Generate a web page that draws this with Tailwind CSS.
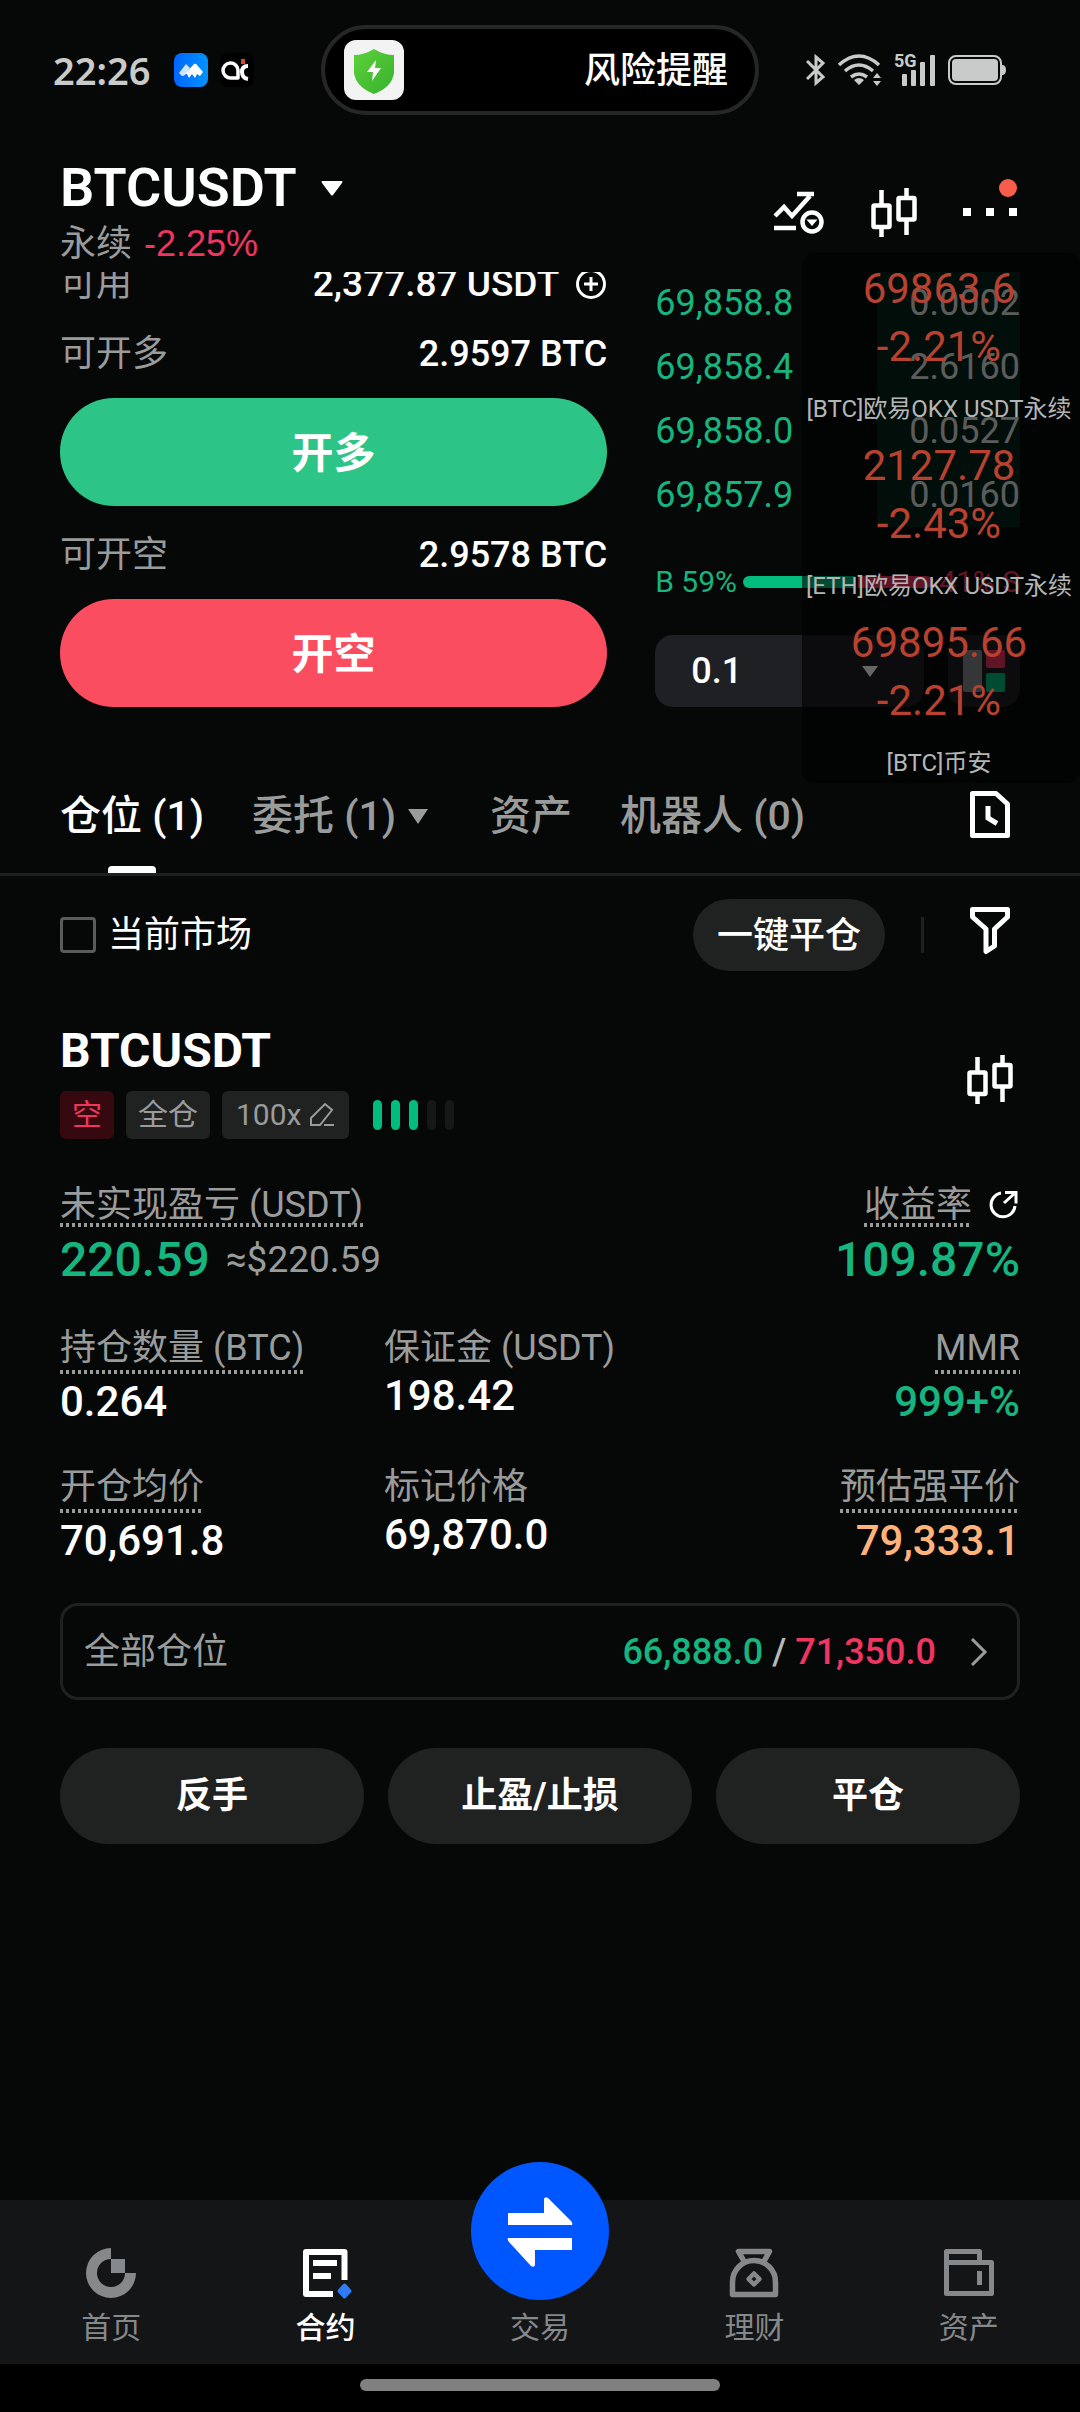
<!DOCTYPE html>
<html lang="zh-CN">
<head>
<meta charset="utf-8">
<meta name="viewport" content="width=device-width, initial-scale=1">
<title>BTCUSDT 永续</title>
<script src="https://cdn.jsdelivr.net/npm/@tailwindcss/browser@4"></script>
</head>
<body class="bg-[#060808] text-white font-[Roboto,'Noto_Sans_CJK_SC',sans-serif] text-[36px] leading-[48px]">
<div class="relative flex min-h-screen flex-col">

  <!-- Status bar -->
  <div class="grid h-[140px] grid-cols-[1fr_auto_1fr] items-center">
    <div class="flex items-center pl-[53px] text-[#c9cbcb]">
      <time class="font-['Noto_Sans',sans-serif] text-[38px] font-semibold">22:26</time>
      <svg class="ml-6 size-[34px]" viewBox="0 0 34 34" role="img" aria-label="消息应用"><defs><linearGradient id="blue" x1="0" y1="0" x2="1" y2="0"><stop stop-color="#0066ff"/><stop offset="1" stop-color="#0093ff"/></linearGradient></defs><rect width="34" height="34" rx="8" fill="url(#blue)"/><path d="M5 20l7-9 4 4-5 7q-3 2-4 0z" fill="#cfe5ff"/><path d="M11 21l9-10q2-1 3 1l6 7-3 4-3-2-2 4-3-4-3 4-2-4z" fill="#fff"/></svg>
      <svg class="ml-3 size-[34px]" viewBox="0 0 34 34" role="img" aria-label="应用通知"><rect width="34" height="34" rx="8" fill="#000"/><path d="M18 25h-7a7.500 7.500 0 1 1 7-8z" fill="none" stroke="#fff" stroke-width="3.500" stroke-linejoin="round"/><path d="M28 13q-6 0-6 6t6 7" fill="none" stroke="#fff" stroke-width="4"/><path d="M21 6h4v5h-4z" fill="#d4492f"/></svg>
    </div>
    <div class="flex h-[90px] w-[438px] items-center justify-between rounded-full border-4 border-[#252626] bg-black pr-[27px] pl-[19px]">
      <svg class="size-[60px]" viewBox="0 0 60 60" role="img" aria-label="安全"><defs><linearGradient id="green" x1="0" y1="0" x2="1" y2="1"><stop stop-color="#5dd23c"/><stop offset="1" stop-color="#37b02c"/></linearGradient></defs><rect width="60" height="60" rx="12" fill="#f3f3f3"/><path d="M30 9q10 6 20 6v18q-2 14-20 21Q12 47 10 33V15q10 0 20-6z" fill="url(#green)"/><path d="M32 20L23 32h6l-1 9 9-13h-6z" fill="#fff"/></svg>
      <span class="pt-[2px] font-medium">风险提醒</span>
    </div>
    <div class="flex items-center justify-end gap-3 pr-[74px] text-[#c9cbcb]">
      <svg class="h-8 w-5" viewBox="0 0 20 32" fill="none" stroke="currentColor" stroke-width="3" role="img" aria-label="蓝牙"><path d="M1 7l16 16-7 6V3l7 6L1 25"/></svg>
      <svg class="h-8 w-11" viewBox="0 0 44 32" fill="none" stroke="currentColor" stroke-width="3.500" role="img" aria-label="无线网络"><path d="M1 11q20-18 40 0M7 17q14-12 28 0M13 23q8-6 16 0"/><path d="M21 31l-5-5q5-4 10 0zM39 19l4 5h-8zM39 32l4-5h-8z" fill="currentColor" stroke="none"/></svg>
      <div class="relative h-8 w-[42px]">
        <span class="absolute top-0 left-0 text-[18px] leading-[14px] font-bold">5G</span>
        <svg class="h-8 w-[42px]" viewBox="0 0 42 32" fill="currentColor" role="img" aria-label="信号"><rect x="8" y="20" width="5" height="12" rx="1"/><rect x="17" y="16" width="5" height="16" rx="1"/><rect x="26" y="8" width="5" height="24" rx="1"/><rect x="36" y="1" width="5" height="31" rx="1"/></svg>
      </div>
      <svg class="h-[30px] w-[58px]" viewBox="0 0 58 30" role="img" aria-label="电量"><rect x="1" y="1" width="52" height="28" rx="7" fill="none" stroke="currentColor" stroke-width="2"/><rect x="4" y="4" width="46" height="22" rx="4" fill="currentColor"/><path d="M54 10q4 0 4 5t-4 5z" fill="currentColor"/></svg>
    </div>
  </div>

  <!-- Pair header -->
  <header class="flex justify-between px-[60px] pt-4 pb-1">
    <div>
      <h1><button class="flex items-center gap-6 text-[54px] leading-16 font-semibold">BTCUSDT
        <svg class="h-[15px] w-[22px]" viewBox="0 0 22 15" fill="currentColor" aria-hidden="true"><path d="M1 0h20q1 0 0 2l-9 12q-1 1-2 0L1 2q-1-2 0-2z"/></svg></button></h1>
      <p class="flex gap-3"><span class="text-[#9a9c9c]">永续</span> <span class="font-['Liberation_Sans',sans-serif] text-[#f03560]">-2.25%</span></p>
    </div>
    <div class="mt-[26px] flex h-[60px] gap-9">
      <button aria-label="指标"><svg class="size-[60px]" viewBox="0 0 60 60" fill="none" stroke="currentColor" stroke-width="4.500"><path d="M7 34l9-9 8 9 18-20M29 12h17M6 46h22"/><circle cx="44" cy="40" r="9.500"/><path d="M38.500 37.500h11L44 44z" fill="currentColor" stroke="none"/></svg></button>
      <button aria-label="K线"><svg class="size-[60px]" viewBox="0 0 60 60" fill="none" stroke="currentColor" stroke-width="4.500"><rect x="9.500" y="23.500" width="16" height="21.500" rx="1"/><rect x="34.500" y="16" width="16" height="21.500" rx="1"/><path d="M17.500 8v15M17.500 46v9M42.500 6v10M42.500 38v15"/></svg></button>
      <button aria-label="更多"><svg class="size-[60px] overflow-visible" viewBox="0 0 60 60" fill="currentColor"><path d="M3 26h8v8H3zM26 26h8v8h-8zM49 26h8v8h-8z"/><circle cx="48" cy="6" r="9" fill="#f85d4b"/></svg></button>
    </div>
  </header>

  <main>
    <!-- Order form and order book, scrolled under the header -->
    <section class="overflow-hidden px-[60px]">
      <div class="-mt-3 grid grid-cols-[3fr_2fr] gap-12">
        <div class="flex flex-col">
          <div class="flex justify-between"><span class="text-[#9a9c9c]">可用</span>
            <button class="flex items-center gap-4 text-[37px] font-medium">2,377.87 USDT
              <svg class="size-8" viewBox="0 0 32 32" fill="none" stroke="currentColor" stroke-width="3" role="img" aria-label="划转"><circle cx="16" cy="16" r="13.500"/><path d="M9 16h14M16 9v14"/></svg></button></div>
          <div class="mt-[22px] flex justify-between"><span class="text-[#9a9c9c]">可开多</span><span class="font-medium">2.9597 BTC</span></div>
          <button class="mt-5 h-[108px] rounded-full bg-[#2dc587] pt-[3px] text-[42px] font-bold">开多</button>
          <div class="mt-[25px] flex justify-between"><span class="text-[#9a9c9c]">可开空</span><span class="font-medium">2.9578 BTC</span></div>
          <button class="mt-5 h-[108px] rounded-full bg-[#fa4e60] pt-[3px] text-[42px] font-bold">开空</button>
        </div>
        <div class="flex flex-col pt-[11px]">
          <table class="w-full leading-16">
            <tbody>
              <tr class="h-16"><td class="p-0 text-[#16b57f]">69,858.8</td><td class="w-[143px] bg-[#06251a] p-0 text-right text-[#e4e6e6]">0.0002</td></tr>
              <tr class="h-16"><td class="p-0 text-[#16b57f]">69,858.4</td><td class="bg-[#06251a] p-0 text-right text-[#e4e6e6]">2.6160</td></tr>
              <tr class="h-16"><td class="p-0 text-[#16b57f]">69,858.0</td><td class="bg-[#06251a] p-0 text-right text-[#e4e6e6]">0.0527</td></tr>
              <tr class="h-16"><td class="p-0 text-[#16b57f]">69,857.9</td><td class="bg-[#06251a] p-0 text-right text-[#e4e6e6]">0.0160</td></tr>
            </tbody>
          </table>
          <div class="mt-[31px] flex items-center gap-[6px] text-[30px]">
            <span class="text-[#16b57f]">B 59%</span>
            <div class="flex h-3 flex-1 gap-[3px] overflow-hidden rounded-full">
              <div class="bg-[#00bd7e]" style="width:59%"></div>
              <div class="flex-1 bg-[#f03560]"></div>
            </div>
            <span class="text-[#f03560]">41% S</span>
          </div>
          <div class="mt-[29px] flex gap-6">
            <div class="relative flex-1">
              <select aria-label="价格精度" class="h-18 w-full appearance-none rounded-[18px] bg-[#1f2023] px-9 font-medium"><option>0.1</option><option>1</option></select>
              <svg class="pointer-events-none absolute top-[31px] right-[46px] h-[11px] w-4" viewBox="0 0 16 11" fill="#fff" aria-hidden="true"><path d="M0 0h16L8 11z"/></svg>
            </div>
            <button aria-label="盘口布局" class="size-18 rounded-[18px] bg-[#1f2023]"><svg class="size-18" viewBox="0 0 72 72"><rect x="15" y="15" width="19" height="42" rx="2" fill="#85888a"/><rect x="38" y="15" width="19" height="18" rx="2" fill="#f03560"/><rect x="38" y="38" width="19" height="19" rx="2" fill="#00bd7e"/></svg></button>
          </div>
        </div>
      </div>
    </section>

    <!-- Tabs -->
    <nav class="mt-[70px] flex h-[99px] items-stretch justify-between border-b-3 border-[#1e1f1f] px-[60px] text-[41px] font-medium text-[#9a9c9c]">
      <div class="flex gap-12">
        <button class="relative pb-[18px] text-white">仓位 (1)<span class="absolute bottom-0 left-1/2 h-[7px] w-12 -translate-x-1/2 rounded-t-[4px] bg-white"></span></button>
        <button class="flex items-center gap-3 pr-[14px] pb-[18px]">委托 (1)<svg class="h-[15px] w-5" viewBox="0 0 20 15" fill="currentColor" aria-hidden="true"><path d="M0 0h20L10 15z"/></svg></button>
        <button class="pb-[18px]">资产</button>
        <button class="pb-[18px]">机器人 (0)</button>
      </div>
      <button class="mt-2 self-start text-white" aria-label="历史记录"><svg class="size-[60px]" viewBox="0 0 60 60" fill="none" stroke="currentColor" stroke-width="5"><path d="M12.500 8.500H36L47.500 19v31.500h-35z" stroke-linejoin="round"/><path d="M28 21v12l9 5.500"/></svg></button>
    </nav>

    <!-- Filters -->
    <div class="mt-[23px] flex h-18 items-center px-[60px]">
      <label class="flex items-center gap-3"><input type="checkbox" class="size-9 appearance-none rounded-[4px] border-3 border-[#5a5b5b] checked:bg-white">当前市场</label>
      <button class="ml-auto h-18 rounded-full bg-[#202121] px-6 pt-[2px] font-medium">一键平仓</button>
      <div class="mx-9 h-9 w-[3px] bg-[#1e1f1f]"></div>
      <button aria-label="筛选"><svg class="size-[60px]" viewBox="0 0 60 60" fill="none" stroke="currentColor" stroke-width="5" stroke-linejoin="round"><path d="M12.500 4.500h35v7.500l-13 12v17L26 46.500V24L12.500 12z"/></svg></button>
    </div>

    <!-- Position -->
    <article class="mt-[52px] px-[60px]">
      <div class="flex items-center justify-between">
        <div>
          <h2 class="text-[48px] leading-14 font-bold">BTCUSDT</h2>
          <div class="mt-3 flex gap-3 text-[30px] text-[#9a9c9c]">
            <span class="rounded-md bg-[#35090f] px-3 text-[#f03560]">空</span>
            <span class="rounded-md bg-[#202121] px-3">全仓</span>
            <button class="flex items-center gap-2 rounded-md bg-[#202121] px-[14px]">100x<svg class="size-[26px]" viewBox="0 0 26 26" fill="none" stroke="currentColor" stroke-width="2" role="img" aria-label="编辑"><path d="M2 16L16 2l7 6L11 23H2zM15 23h10"/></svg></button>
            <div class="ml-3 flex items-center gap-[9px]" role="img" aria-label="风险等级 3/5">
              <span class="h-[30px] w-[9px] rounded-full bg-[#00bd7e]"></span><span class="h-[30px] w-[9px] rounded-full bg-[#00bd7e]"></span><span class="h-[30px] w-[9px] rounded-full bg-[#00bd7e]"></span><span class="h-[30px] w-[9px] rounded-full bg-[#161818]"></span><span class="h-[30px] w-[9px] rounded-full bg-[#161818]"></span>
            </div>
          </div>
        </div>
        <button aria-label="K线"><svg class="size-[60px]" viewBox="0 2 60 60" fill="none" stroke="currentColor" stroke-width="4.500"><rect x="9.500" y="23.500" width="16" height="21.500" rx="1"/><rect x="34.500" y="16" width="16" height="21.500" rx="1"/><path d="M17.500 8v15M17.500 46v9M42.500 6v10M42.500 38v15"/></svg></button>
      </div>

      <dl class="mt-12 flex justify-between font-medium">
        <div>
          <dt class="w-fit font-normal text-[#9a9c9c] leading-9">未实现盈亏 (USDT)<div class="h-1 bg-[repeating-linear-gradient(90deg,#9a9c9c_0_3px,transparent_3px_6px)]"></div></dt>
          <dd class="mt-[3px] flex h-[60px] items-center gap-4 text-[48px] text-[#16b57f]">220.59 <span class="text-[37px] font-normal text-[#9a9c9c]">≈$220.59</span></dd>
        </div>
        <div class="flex flex-col items-end">
          <dt class="flex gap-4 font-normal text-[#9a9c9c] leading-9"><span>收益率<span class="block h-1 bg-[repeating-linear-gradient(90deg,#9a9c9c_0_3px,transparent_3px_6px)]"></span></span>
            <button aria-label="分享" class="mt-[3px] h-[30px] text-white"><svg class="h-[30px] w-8" viewBox="0 0 32 30" fill="none" stroke="currentColor" stroke-width="3"><path d="M13 3a12 12 0 1 0 14 13M16 13L27 3M17 2.500h11v11"/></svg></button></dt>
          <dd class="mt-[3px] text-[48px] leading-[60px] text-[#16b57f]">109.87%</dd>
        </div>
      </dl>

      <dl class="mt-10 grid grid-cols-3 gap-x-3 gap-y-[43px] text-[42px] font-medium">
        <div>
          <dt class="w-fit text-[36px] leading-9 font-normal text-[#9a9c9c]">持仓数量 (BTC)<div class="mt-1 h-1 bg-[repeating-linear-gradient(90deg,#9a9c9c_0_3px,transparent_3px_6px)]"></div></dt>
          <dd class="mt-1">0.264</dd>
        </div>
        <div>
          <dt class="text-[36px] leading-9 font-normal text-[#9a9c9c]">保证金 (USDT)</dt>
          <dd class="mt-[6px]">198.42</dd>
        </div>
        <div class="flex flex-col items-end">
          <dt class="w-fit text-[36px] leading-9 font-normal text-[#9a9c9c]">MMR<div class="mt-1 h-1 bg-[repeating-linear-gradient(90deg,#9a9c9c_0_3px,transparent_3px_6px)]"></div></dt>
          <dd class="mt-1 text-[#16b57f]">999+%</dd>
        </div>
        <div>
          <dt class="w-fit text-[36px] leading-9 font-normal text-[#9a9c9c]">开仓均价<div class="mt-1 h-1 bg-[repeating-linear-gradient(90deg,#9a9c9c_0_3px,transparent_3px_6px)]"></div></dt>
          <dd class="mt-1">70,691.8</dd>
        </div>
        <div>
          <dt class="text-[36px] leading-9 font-normal text-[#9a9c9c]">标记价格</dt>
          <dd class="mt-[6px]">69,870.0</dd>
        </div>
        <div class="flex flex-col items-end">
          <dt class="w-fit text-[36px] leading-9 font-normal text-[#9a9c9c]">预估强平价<div class="mt-1 h-1 bg-[repeating-linear-gradient(90deg,#9a9c9c_0_3px,transparent_3px_6px)]"></div></dt>
          <dd class="mt-1 text-[#ffb27a]">79,333.1</dd>
        </div>
      </dl>

      <a href="#" class="mt-[38px] flex h-[97px] items-center rounded-[18px] border-3 border-[#1f2020] px-[21px]">
        <span class="text-[#9a9c9c]">全部仓位</span>
        <span class="ml-auto font-medium"><span class="text-[#16b57f]">66,888.0</span> <span class="text-[#b8baba]">/</span> <span class="text-[#f03560]">71,350.0</span></span>
        <svg class="ml-[34px] mr-2 h-7 w-[18px]" viewBox="0 0 18 28" fill="none" stroke="#9a9c9c" stroke-width="3" aria-hidden="true"><path d="M2 1l13 13L2 27"/></svg>
      </a>

      <div class="mt-12 grid grid-cols-3 gap-6 font-bold">
        <button class="h-24 rounded-full bg-[#202121]">反手</button>
        <button class="h-24 rounded-full bg-[#202121]">止盈/止损</button>
        <button class="h-24 rounded-full bg-[#202121]">平仓</button>
      </div>
    </article>
  </main>

  <!-- Bottom navigation -->
  <nav class="mt-auto grid h-[164px] grid-cols-5 bg-[#141516] px-1 text-[30px] leading-10 text-[#85898b]">
    <a href="#" class="flex flex-col items-center pt-[43px]"><svg class="size-[60px]" viewBox="0 0 60 60" fill="currentColor" aria-hidden="true"><path d="M30 5a25 25 0 1 0 25 25H44a14 14 0 1 1-14-14z"/><path d="M30 16h14v14H30z"/></svg><span class="mt-[5px]">首页</span></a>
    <a href="#" aria-current="page" class="flex flex-col items-center pt-[43px] font-medium text-white"><svg class="size-[60px]" viewBox="0 0 60 60" fill="none" stroke="currentColor" stroke-width="6" aria-hidden="true"><path d="M48.500 37V9H10v42h27" stroke-linejoin="round"/><path d="M17 20h24M17 33h18"/><path d="M48.500 42.500l5 5.500-5 5.500-5-5.500z" fill="#2f7cf6" stroke="#2f7cf6" stroke-width="4" stroke-linejoin="round"/></svg><span class="mt-[5px]">合约</span></a>
    <a href="#" class="relative flex flex-col items-center pt-[108px]"><svg class="absolute -top-[38px] size-[138px]" viewBox="0 0 138 138" aria-hidden="true"><circle cx="69" cy="69" r="69" fill="#0057ff"/><path d="M37 51h36V37q1-3 4-1l23 23q2 2 1 4H37zM101 76v12H64v15q-1 3-4 1L38 80q-2-2-1-4z" fill="#fff"/></svg><span>交易</span></a>
    <a href="#" class="flex flex-col items-center pt-[43px]"><svg class="size-[60px]" viewBox="0 0 60 60" fill="none" stroke="currentColor" stroke-width="5.500" stroke-linejoin="round" aria-hidden="true"><path d="M21 20L14.500 8.500h31L39 20M8.500 51.500V39a21.500 21.500 0 0 1 43 0v12.500z"/><path d="M30 30.500l5.500 5.500-5.500 5.500-5.500-5.500z" stroke-width="4.500"/></svg><span class="mt-[5px]">理财</span></a>
    <a href="#" class="flex flex-col items-center pt-[43px]"><svg class="size-[60px]" viewBox="0 0 60 60" fill="none" stroke="currentColor" stroke-width="5" stroke-linejoin="round" aria-hidden="true"><path d="M7.500 19.500h45v31h-45zM7.500 19.500v-11h33v11M40.500 28v14"/></svg><span class="mt-[5px]">资产</span></a>
  </nav>
  <div class="flex h-12 justify-center bg-black pt-[15px]"><div class="h-3 w-1/3 rounded-full bg-[#808080]"></div></div>

  <!-- Floating price ticker -->
  <aside aria-label="悬浮行情" class="absolute top-[253px] right-0 flex w-[278px] flex-col gap-2 rounded-[12px] bg-black/60 pt-[7px] pr-1 text-center text-[42px] leading-[58px] whitespace-nowrap text-[#b8412f]">
    <div><p>69863.6</p><p>-2.21%</p><p class="mt-[13px] text-[24px] leading-10 text-[#b4b6b6]">[BTC]欧易OKX USDT永续</p></div>
    <div><p>2127.78</p><p>-2.43%</p><p class="mt-[13px] text-[24px] leading-10 text-[#b4b6b6]">[ETH]欧易OKX USDT永续</p></div>
    <div><p>69895.66</p><p>-2.21%</p><p class="mt-[13px] text-[24px] leading-10 text-[#b4b6b6]">[BTC]币安</p></div>
  </aside>
</div>
</body>
</html>
